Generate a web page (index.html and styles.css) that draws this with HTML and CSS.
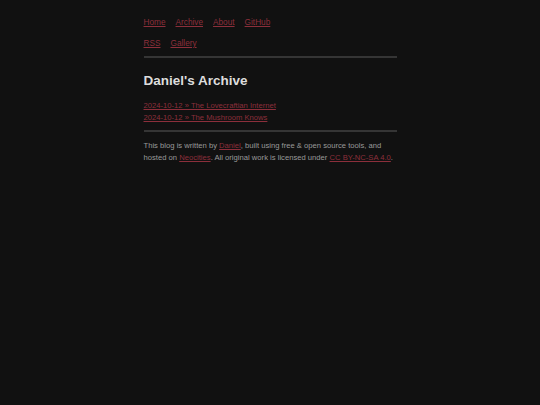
FILE: index.html
```html
<!DOCTYPE html>
<html lang="en">
<head>
<meta charset="utf-8">
<title>Daniel's Archive</title>
<link rel="stylesheet" href="styles.css">
</head>
<body>
<div class="page">
  <nav class="nav">
    <div class="nav-row">
      <a href="#">Home</a>
      <a href="#">Archive</a>
      <a href="#">About</a>
      <a href="#">GitHub</a>
    </div>
    <div class="nav-row">
      <a href="#">RSS</a>
      <a href="#">Gallery</a>
    </div>
  </nav>
  <hr class="rule">
  <main>
    <h1 class="title">Daniel's Archive</h1>
    <ul class="posts">
      <li><a href="#">2024-10-12 » The Lovecraftian Internet</a></li>
      <li><a href="#">2024-10-12 » The Mushroom Knows</a></li>
    </ul>
  </main>
  <hr class="rule">
  <footer class="footer">
    <p>This blog is written by <a href="#">Daniel</a>, built using free &amp; open source tools, and hosted on <a href="#">Neocities</a>. All original work is licensed under <a href="#">CC BY-NC-SA 4.0</a>.</p>
  </footer>
</div>
</body>
</html>
```

FILE: styles.css
```css
html, body {
  margin: 0;
  padding: 0;
  background: #111111;
}
body {
  font-family: "Liberation Sans", Arial, sans-serif;
  font-size: 7.65px;
  line-height: 12px;
  color: #999999;
}
a {
  color: #8c2f3b;
  text-decoration: underline;
}
.page {
  width: 253px;
  margin: 0 auto;
  padding-top: 17px;
}
.nav {
  display: flex;
  flex-direction: column;
  gap: 9px;
  font-size: 8.25px;
}
.nav-row {
  display: flex;
  gap: 10px;
}
.rule {
  border: 0;
  height: 2px;
  background: #353535;
  margin: 6px 0 0 0;
}
.title {
  font-size: 13.5px;
  line-height: 18px;
  color: #dddddd;
  margin: 14px 0 10px 0;
  font-weight: bold;
}
.posts {
  list-style: none;
  margin: 0 0 5px 0;
  padding: 0;
}
.footer p {
  margin: 8px 0 0 0;
}
```
